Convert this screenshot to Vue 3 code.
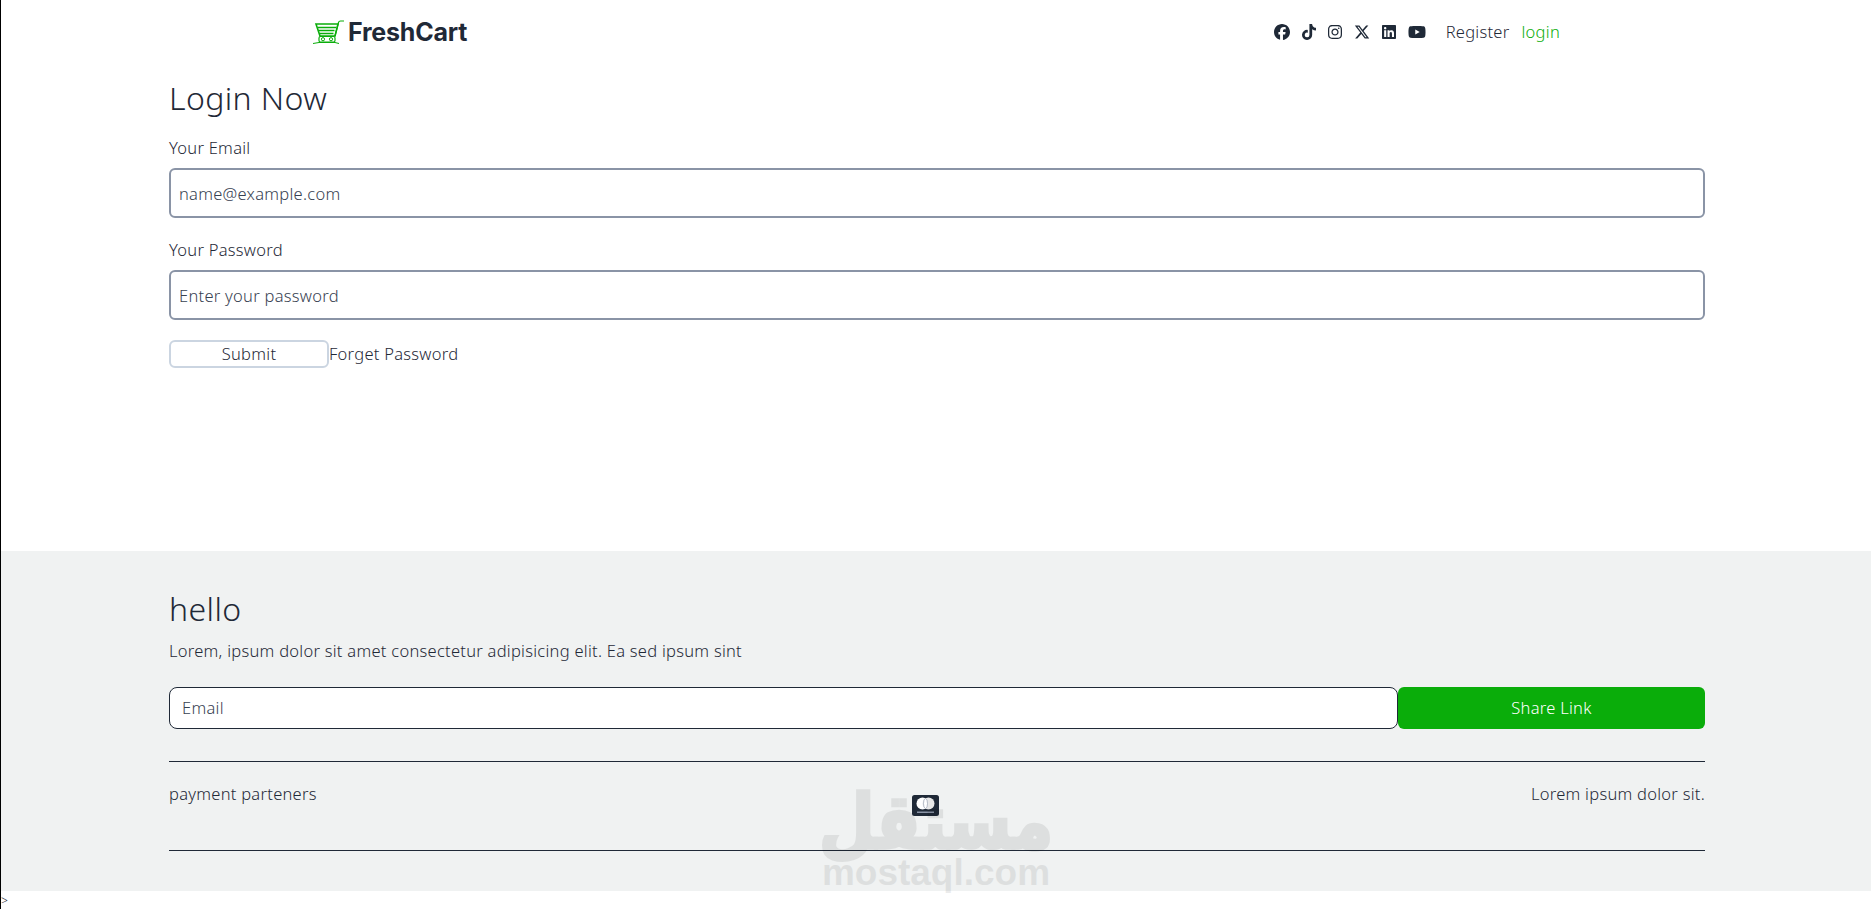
<script setup>
const icons = [
  { w: 512, cls: 'i', d: 'M512 256C512 114.6 397.4 0 256 0S0 114.6 0 256C0 376 82.7 476.8 194.2 504.5V334.2H141.4V256h52.8V222.3c0-87.1 39.4-127.5 125-127.5c16.2 0 44.2 3.2 55.7 6.4V172c-6-.6-16.5-1-29.6-1c-42 0-58.2 15.9-58.2 57.2V256h83.6l-14.4 78.2H287V510.1C413.8 494.8 512 386.9 512 256h0z' },
  { w: 448, d: 'M448,209.91a210.06,210.06,0,0,1-122.77-39.25V349.38A162.55,162.55,0,1,1,185,188.31V278.2a74.62,74.62,0,1,0,52.23,71.18V0l88,0a121.18,121.18,0,0,0,1.86,22.17h0A122.18,122.18,0,0,0,381,102.39a121.43,121.43,0,0,0,67,20.14Z' },
  { w: 448, d: 'M224.1 141c-63.6 0-114.9 51.3-114.9 114.9s51.3 114.9 114.9 114.9S339 319.5 339 255.9 287.7 141 224.1 141zm0 189.6c-41.1 0-74.7-33.5-74.7-74.7s33.5-74.7 74.7-74.7 74.7 33.5 74.7 74.7-33.6 74.7-74.7 74.7zm146.4-194.3c0 14.9-12 26.8-26.8 26.8-14.9 0-26.8-12-26.8-26.8s12-26.8 26.8-26.8 26.8 12 26.8 26.8zm76.1 27.2c-1.7-35.9-9.9-67.7-36.2-93.9-26.2-26.2-58-34.4-93.9-36.2-37-2.1-147.9-2.1-184.9 0-35.8 1.7-67.6 9.9-93.9 36.1s-34.4 58-36.2 93.9c-2.1 37-2.1 147.9 0 184.9 1.7 35.9 9.9 67.7 36.2 93.9s58 34.4 93.9 36.2c37 2.1 147.9 2.1 184.9 0 35.9-1.7 67.7-9.9 93.9-36.2 26.2-26.2 34.4-58 36.2-93.9 2.1-37 2.1-147.8 0-184.8zM398.8 388c-7.8 19.6-22.9 34.7-42.6 42.6-29.5 11.7-99.5 9-132.1 9s-102.7 2.6-132.1-9c-19.6-7.8-34.7-22.9-42.6-42.6-11.7-29.5-9-99.5-9-132.1s-2.6-102.7 9-132.1c7.8-19.6 22.9-34.7 42.6-42.6 29.5-11.7 99.5-9 132.1-9s102.7-2.6 132.1 9c19.6 7.8 34.7 22.9 42.6 42.6 11.7 29.5 9 99.5 9 132.1s2.7 102.7-9 132.1z' },
  { w: 512, d: 'M389.2 48h70.6L305.6 224.2 487 464H345L233.7 318.6 106.5 464H35.8L200.7 275.5 26.8 48H172.4L272.9 180.9 389.2 48zM364.4 421.8h39.1L151.1 88h-42L364.4 421.8z' },
  { w: 448, d: 'M416 32H31.9C14.3 32 0 46.5 0 64.3v383.4C0 465.5 14.3 480 31.9 480H416c17.6 0 32-14.5 32-32.3V64.3c0-17.8-14.4-32.3-32-32.3zM135.4 416H69V202.2h66.5V416zm-33.2-243c-21.3 0-38.5-17.3-38.5-38.5S80.9 96 102.2 96c21.2 0 38.5 17.3 38.5 38.5 0 21.3-17.2 38.5-38.5 38.5zm282.1 243h-66.4V312c0-24.8-.5-56.7-34.5-56.7-34.6 0-39.9 27-39.9 54.9V416h-66.4V202.2h63.7v29.2h.9c8.9-16.8 30.6-34.5 62.9-34.5 67.2 0 79.7 44.3 79.7 101.9V416z' },
  { w: 576, d: 'M549.655 124.083c-6.281-23.65-24.787-42.276-48.284-48.597C458.781 64 288 64 288 64S117.22 64 74.629 75.486c-23.497 6.322-42.003 24.947-48.284 48.597-11.412 42.867-11.412 132.305-11.412 132.305s0 89.438 11.412 132.305c6.281 23.65 24.787 41.5 48.284 47.821C117.22 448 288 448 288 448s170.78 0 213.371-11.486c23.497-6.321 42.003-24.171 48.284-47.821 11.412-42.867 11.412-132.305 11.412-132.305s0-89.438-11.412-132.305zm-317.51 213.508V175.185l142.739 81.205-142.739 81.201z' }
]
</script>

<template>
  <div class="page">
    <nav class="nav">
      <div class="brand">
        <svg class="cart" viewBox="0 0 32 26" fill="none" stroke="#0aad0a">
          <path d="M3 5h22l-3 12H7L3 5Z" stroke-width="1.6" />
          <path d="M5 8.500h18M5.500 11.500h16M6.500 14.500h14" stroke-width="1.500" />
          <path d="M22 17l3.500-13.500c.2-1 1-1.500 2-1.500H31" stroke-width="1.200" />
          <path d="M0 24.500l6-1h16l4 1" stroke-width="1" />
          <rect x="6" y="17.500" width="16" height="5.500" rx="1.500" stroke-width="1.200" />
          <circle cx="10" cy="20.200" r="1.600" stroke-width="1" />
          <circle cx="18" cy="20.200" r="1.600" stroke-width="1" />
        </svg>
        <span class="brand-name">FreshCart</span>
      </div>
      <div class="nav-right">
        <div class="social">
          <svg v-for="(ic, n) in icons" :key="n" :viewBox="`0 0 ${ic.w} 512`" class="social-icon" fill="#1f2937">
            <path :d="ic.d" />
          </svg>
        </div>
        <a class="nav-link">Register</a>
        <a class="nav-link green">login</a>
      </div>
    </nav>

    <main class="main">
      <h1 class="title login-title">Login Now</h1>
      <label class="label">Your Email</label>
      <input class="field" type="text" placeholder="name@example.com" />
      <label class="label second">Your Password</label>
      <input class="field" type="text" placeholder="Enter your password" />
      <div class="actions">
        <button class="submit" type="button">Submit</button>
        <span>Forget Password</span>
      </div>
    </main>

    <footer class="footer">
      <div class="footer-inner">
        <h2 class="title">hello</h2>
        <p class="lead">Lorem, ipsum dolor sit amet consectetur adipisicing elit. Ea sed ipsum sint</p>
        <div class="share">
          <input class="share-input" type="text" placeholder="Email" />
          <button class="share-btn" type="button">Share Link</button>
        </div>
        <div class="partners">
          <span>payment parteners</span>
          <svg class="card" viewBox="0 0 27 21">
            <rect width="27" height="21" rx="2.500" fill="#1f2937" />
            <circle cx="10.500" cy="8.500" r="6" fill="#fff" />
            <circle cx="16.500" cy="8.500" r="6" fill="#e8e8e8" />
            <ellipse cx="13.500" cy="8.500" rx="2" ry="5" fill="#fff" stroke="#8a94a6" stroke-width=".6" />
            <rect x="5" y="16.500" width="17" height="1.500" fill="#8a94a6" />
          </svg>
          <span>Lorem ipsum dolor sit.</span>
        </div>
      </div>
    </footer>
    <div class="tail">&gt;</div>

    <div class="mark">
      <span class="mark-ar" dir="rtl" lang="ar">مستقل</span>
      <span class="mark-en">mostaql.com</span>
    </div>
  </div>
</template>

<style scoped>
.page {
  position: relative;
  height: 909px;
  box-sizing: border-box;
  border-left: 1px solid #000;
  overflow: hidden;
  font-family: "Noto Sans", "Open Sans", sans-serif;
  font-weight: 300;
  font-size: 16.500px;
  letter-spacing: 0.27px;
  line-height: 24px;
  color: #1f2937;
}
.nav {
  height: 64px;
  padding: 0 311px 0 312px;
  display: flex;
  align-items: center;
  justify-content: space-between;
}
.brand {
  display: flex;
  align-items: center;
  gap: 3px;
}
.cart {
  width: 32px;
  height: 26px;
}
.brand-name {
  font-family: Inter, sans-serif;
  font-weight: 700;
  font-size: 25px;
  letter-spacing: -0.2px;
}
.nav-right {
  display: flex;
  align-items: center;
  gap: 12px;
}
.social {
  display: flex;
  align-items: center;
  gap: 12px;
  margin-right: 8px;
}
.social-icon {
  height: 16px;
  display: block;
}
.green {
  color: #0aad0a;
}
.main {
  width: 1536px;
  margin-left: 168px;
  height: 487px;
}
.title {
  margin: 0;
  font-size: 32px;
  line-height: 36px;
  font-weight: 300;
  letter-spacing: 0.4px;
}
.login-title {
  padding-top: 16px;
}
.label {
  display: block;
  margin: 20px 0 8px;
}
.second {
  margin-top: 20px;
}
.field {
  display: block;
  box-sizing: border-box;
  width: 100%;
  height: 50px;
  padding: 0 8px;
  border: 2px solid #8a94a6;
  border-radius: 6px;
  font: inherit;
  letter-spacing: inherit;
  background: #fff;
  outline: none;
}
.field::placeholder,
.share-input::placeholder {
  color: #374151;
  opacity: 1;
}
.actions {
  display: flex;
  align-items: center;
  margin-top: 20px;
}
.submit {
  box-sizing: border-box;
  width: 160px;
  height: 28px;
  border: 2px solid #cbd5e1;
  border-radius: 6px;
  background: #fff;
  font: inherit;
  letter-spacing: inherit;
  color: inherit;
  padding: 0;
}
.footer {
  background: #f0f2f2;
  height: 340px;
}
.footer-inner {
  width: 1536px;
  margin-left: 168px;
  padding-top: 40px;
}
.lead {
  margin: 12px 0 0;
}
.share {
  display: flex;
  margin-top: 24px;
  height: 42px;
}
.share-input {
  box-sizing: border-box;
  flex: 1;
  min-width: 0;
  padding: 0 12px;
  border: 1px solid #1f2937;
  border-radius: 8px;
  background: #fff;
  font: inherit;
  letter-spacing: inherit;
  outline: none;
}
.share-btn {
  flex: none;
  width: 307px;
  border: 0;
  border-radius: 6px;
  background: #0aad0a;
  color: #fff;
  font: inherit;
  letter-spacing: inherit;
  padding: 0;
}
.partners {
  margin-top: 32px;
  height: 90px;
  box-sizing: border-box;
  border-top: 1px solid #1f2937;
  border-bottom: 1px solid #1f2937;
  padding-top: 20px;
  display: flex;
  justify-content: space-between;
  align-items: flex-start;
}
.card {
  width: 27px;
  height: 21px;
  margin: 13px 0 0 3px;
}
.tail {
  font-size: 12px;
  line-height: 19px;
}
.mark {
  position: absolute;
  left: 822px;
  top: 788px;
  width: 226px;
  display: flex;
  flex-direction: column;
  align-items: center;
  color: #000;
  opacity: 0.075;
  letter-spacing: 0;
  pointer-events: none;
}
.mark-ar {
  font-family: "DejaVu Sans", sans-serif;
  font-weight: 700;
  font-size: 64px;
  line-height: 68px;
  -webkit-text-stroke: 3px #000;
  transform: scaleY(1.18);
}
.mark-en {
  font-family: "Liberation Sans", sans-serif;
  font-weight: 700;
  font-size: 37px;
  line-height: 34px;
}
</style>
